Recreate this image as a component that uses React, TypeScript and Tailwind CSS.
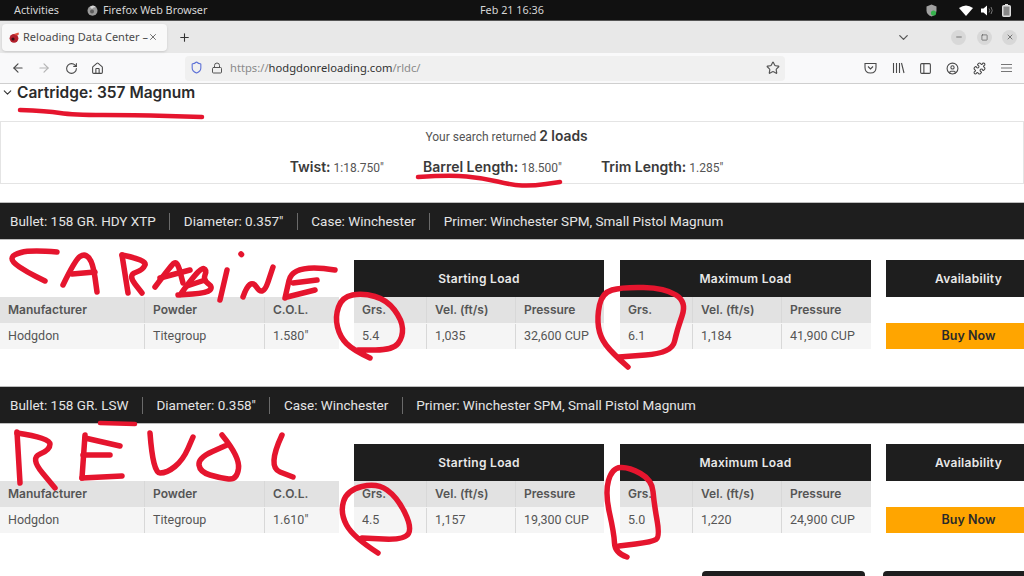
import React from 'react';
import {
  ArrowLeft,
  ArrowRight,
  ChevronDown,
  House,
  Lock,
  Minus,
  Plus,
  Puzzle,
  RotateCw,
  Shield,
  Star,
  X,
  CircleUser,
  PanelLeft,
  Square,
} from 'lucide-react';

type Point = [number, number];

const heading = { fontFamily: '"Inter", "Open Sans", sans-serif' };

// hand drawn red marks, page coordinates
const marks: Point[][] = [
  [[20, 110], [47, 111], [73, 115], [133, 115], [202, 117]],
  [[418, 177], [450, 175], [483, 178], [512, 185], [532, 186], [560, 182]],
  [[100, 423], [135, 424]],
  // CARABINE
  [[57, 252], [30, 250], [12, 255], [12, 262], [27, 272], [45, 281]],
  [[63, 285], [75, 260], [85, 253], [93, 263], [97, 292]],
  [[72, 274], [95, 272]],
  [[122, 255], [128, 293]],
  [[122, 255], [147, 260], [143, 270], [128, 275], [142, 293]],
  [[155, 287], [170, 267], [177, 260], [183, 283]],
  [[160, 278], [190, 270]],
  [[180, 295], [200, 267], [207, 270], [203, 280], [213, 287], [207, 293], [178, 295]],
  [[187, 286], [205, 280]],
  [[227, 270], [220, 300]],
  [[241, 254], [241.5, 254.5]],
  [[243, 297], [250, 277], [263, 297], [273, 267]],
  [[335, 270], [293, 263], [285, 298]],
  [[293, 283], [317, 280]],
  [[287, 297], [315, 290]],
  // circles, first table
  [[370, 358], [353, 350], [340, 337], [335, 317], [342, 297], [363, 293], [387, 300], [402, 320], [403, 337], [393, 350], [358, 350]],
  [[628, 367], [612, 353], [600, 337], [597, 317], [602, 293], [622, 287], [665, 288], [687, 302], [677, 330], [672, 353], [619, 357]],
  // REVOL
  [[17, 432], [20, 483]],
  [[17, 433], [50, 438], [50, 450], [30, 458], [55, 488]],
  [[85, 435], [82, 478]],
  [[85, 438], [120, 446]],
  [[83, 455], [110, 455]],
  [[82, 478], [122, 476]],
  [[150, 433], [153, 473], [167, 473], [183, 460], [193, 437]],
  [[222, 435], [240, 457], [237, 480], [220, 478], [200, 472], [198, 458], [227, 445]],
  [[282, 435], [267, 467], [293, 477]],
  // circles, second table
  [[378, 553], [353, 537], [340, 513], [347, 490], [377, 483], [397, 497], [412, 527], [405, 540], [362, 538]],
  [[627, 557], [615, 553], [614, 533], [605, 493], [612, 468], [629, 467], [652, 480], [654, 503], [660, 537], [652, 542], [619, 546]],
];

const smooth = (pts: Point[]) => {
  let d = `M${pts[0][0]} ${pts[0][1]}`;
  for (let i = 1; i < pts.length - 1; i++) {
    const mx = (pts[i][0] + pts[i + 1][0]) / 2;
    const my = (pts[i][1] + pts[i + 1][1]) / 2;
    d += ` Q${pts[i][0]} ${pts[i][1]} ${mx} ${my}`;
  }
  const last = pts[pts.length - 1];
  return `${d} L${last[0]} ${last[1]}`;
};

const Cell = ({ className, children }: { className: string; children: React.ReactNode }) => (
  <div className={`flex items-center pl-2 border-r border-[#d8d8d8] last:border-r-0 ${className}`}>{children}</div>
);

const Bar = ({ items }: { items: string[] }) => (
  <div className="flex h-[38px] items-center border-y border-[#bdbdbd] bg-[#1e1e1e] pl-[10px] pt-[1px] text-[13.5px] text-[#e4e4e4]">
    {items.map((item, i) => (
      <React.Fragment key={item}>
        {i > 0 && <span className="mx-[13.5px] h-[17px] w-px bg-[#6a6a6a]" />}
        <span>{item}</span>
      </React.Fragment>
    ))}
  </div>
);

const LoadHead = ({ title }: { title: string }) => (
  <div
    style={heading}
    className="flex h-[37px] items-center justify-center bg-[#1e1e1e] text-[12px] font-semibold tracking-[0.3px] text-[#e8e8e8]"
  >
    {title}
  </div>
);

const LoadColumns = ({ cols, vals }: { cols: string[]; vals: string[] }) => (
  <div>
    <div style={heading} className="flex h-[26px] bg-[#e2e2e2] text-[12px] font-semibold text-[#555555]">
      {cols.map((c, i) => (
        <Cell key={c} className={['w-[73px]', 'w-[89px]', 'flex-1'][i]}>{c}</Cell>
      ))}
    </div>
    <div className="flex h-[26px] bg-[#f5f5f5] pt-px text-[12.5px] text-[#555555]">
      {vals.map((v, i) => (
        <Cell key={v} className={['w-[73px]', 'w-[89px]', 'flex-1'][i]}>{v}</Cell>
      ))}
    </div>
  </div>
);

const LoadTable = ({ col, start, max }: { col: string; start: string[]; max: string[] }) => (
  <div className="mt-5 flex">
    <div className="w-[339px] shrink-0 pt-[37px]">
      <div style={heading} className="flex h-[26px] bg-[#e2e2e2] text-[12px] font-semibold text-[#555555]">
        <Cell className="w-[145px]">Manufacturer</Cell>
        <Cell className="w-[120px]">Powder</Cell>
        <Cell className="flex-1">C.O.L.</Cell>
      </div>
      <div className="flex h-[26px] bg-[#f5f5f5] pt-px text-[12.5px] text-[#555555]">
        <Cell className="w-[145px]">Hodgdon</Cell>
        <Cell className="w-[120px]">Titegroup</Cell>
        <Cell className="flex-1">{col}</Cell>
      </div>
    </div>
    <div className="ml-[15px] w-[250px] shrink-0">
      <LoadHead title="Starting Load" />
      <LoadColumns cols={['Grs.', 'Vel. (ft/s)', 'Pressure']} vals={start} />
    </div>
    <div className="ml-4 w-[251px] shrink-0">
      <LoadHead title="Maximum Load" />
      <LoadColumns cols={['Grs.', 'Vel. (ft/s)', 'Pressure']} vals={max} />
    </div>
    <div className="ml-[15px] w-[165px] shrink-0">
      <LoadHead title="Availability" />
      <div
        style={heading}
        className="mt-[26px] flex h-[26px] items-center justify-center bg-[#ffa500] text-[12.5px] font-semibold text-[#2a2a2a]"
      >
        Buy Now
      </div>
    </div>
  </div>
);

const Spec = ({ label, value }: { label: string; value: string }) => (
  <span className="text-[12px] text-[#555555]">
    <span style={heading} className="text-[14px] font-semibold text-[#3a3a3a]">{label}</span> {value}
  </span>
);

const WindowButton = ({ children, className }: { children: React.ReactNode; className: string }) => (
  <span className={`flex h-[15px] w-[15px] items-center justify-center rounded-full bg-[#d8d8d8] ${className}`}>{children}</span>
);

export default function App() {
  return (
    <div className="relative h-[576px] w-[1024px] overflow-hidden bg-white" style={{ fontFamily: 'Roboto, sans-serif' }}>
      {/* gnome top bar */}
      <div
        className="relative flex h-[21px] items-center justify-between border-b border-[#555555] bg-[#111111] pl-[14px] pr-[13px] text-[10.8px] text-[#d6d6d6]"
        style={{ fontFamily: '"Noto Sans", sans-serif' }}
      >
        <div className="flex items-center">
          <span>Activities</span>
          <svg className="ml-7" width="11" height="11" viewBox="0 0 11 11">
            <circle cx="5.5" cy="5.8" r="5" fill="#9a9a9a" />
            <path d="M3 2 Q6 -1 9 2 Q6 2 5 4Z" fill="#d8d8d8" />
            <circle cx="5" cy="6.5" r="2" fill="#5c5c5c" />
          </svg>
          <span className="ml-[5px]">Firefox Web Browser</span>
        </div>
        <span className="absolute left-[480px]">Feb 21  16:36</span>
        <div className="flex items-center">
          <svg width="11" height="13" viewBox="0 0 11 13">
            <path d="M5.5 0.5 L10.5 2.5 V6.5 Q10.5 10.5 5.5 12.5 Q0.5 10.5 0.5 6.5 V2.5Z" fill="#a0a0a0" />
            <circle cx="7.5" cy="9" r="2.6" fill="#37b24d" />
          </svg>
          <svg className="ml-[22px]" width="14" height="11" viewBox="0 0 14 11">
            <path d="M0 3 Q7 -2 14 3 L7 11Z" fill="#ffffff" />
          </svg>
          <svg className="ml-[8px]" width="13" height="11" viewBox="0 0 13 11">
            <path d="M0 3.5 H2.5 L6 0.5 V10.5 L2.5 7.5 H0Z" fill="#ffffff" />
            <path d="M8 3.5 Q9.5 5.5 8 7.5 M10 2 Q12.5 5.5 10 9" stroke="#777777" fill="none" />
          </svg>
          <svg className="ml-[8px]" width="9" height="13" viewBox="0 0 9 13">
            <rect x="3" y="0" width="3" height="1.5" fill="#dddddd" />
            <rect x="0.75" y="1.75" width="7.5" height="10.5" rx="1" fill="#888888" stroke="#dddddd" strokeWidth="1.5" />
          </svg>
        </div>
      </div>

      {/* tab strip */}
      <div className="flex h-[32px] items-center justify-between bg-[#e8e8e8] pl-[2px] pr-[7px]">
        <div className="flex items-center">
          <div className="flex h-[27px] w-[165px] items-center rounded bg-[#f9f9f9] pl-[7px] shadow-sm" style={{ fontFamily: '"Noto Sans", sans-serif' }}>
            <svg width="11" height="11" viewBox="0 0 11 11">
              <circle cx="5" cy="6.3" r="4.4" fill="#b3202c" />
              <circle cx="4" cy="7" r="1.6" fill="#3a1015" />
              <path d="M5 2 L9.5 0.5 L10 2.5 L7 3.5Z" fill="#e0503c" />
            </svg>
            <span className="ml-[3px] w-[125px] whitespace-nowrap text-[11px] text-[#4a4a4a]">Reloading Data Center –</span>
            <X size={10} className="text-[#555555]" />
          </div>
          <Plus size={13} className="ml-[11px] text-[#333333]" />
        </div>
        <div className="flex items-center">
          <ChevronDown size={15} className="text-[#555555]" />
          <WindowButton className="ml-[40px]"><Minus size={8} className="text-[#444444]" /></WindowButton>
          <WindowButton className="ml-[11px]"><Square size={7} className="text-[#444444]" /></WindowButton>
          <WindowButton className="ml-[10px]"><X size={8} className="text-[#444444]" /></WindowButton>
        </div>
      </div>

      {/* nav toolbar */}
      <div className="flex h-[31px] items-center border-b border-[#cfcfcf] bg-[#f9f9fa] pl-[11px] text-[#4a4a4a]">
        <ArrowLeft size={14} />
        <ArrowRight size={14} className="ml-[12px] text-[#b5b5b5]" />
        <RotateCw size={13} className="ml-[14px]" />
        <House size={13} className="ml-[13px]" />
        <div className="ml-[81px] flex h-[25px] w-[600px] items-center justify-between rounded bg-[#f0f0f0] pl-[5px] pr-[5px]" style={{ fontFamily: '"Noto Sans", sans-serif' }}>
          <div className="flex items-center text-[11.2px] text-[#8a8a8a]">
            <Shield size={13} className="text-[#5b6fd6]" />
            <Lock size={12} className="ml-[8px] text-[#555555]" />
            <span className="ml-[7px]">https://<span className="text-[#333333]">hodgdonreloading.com</span>/rldc/</span>
          </div>
          <Star size={14} className="text-[#555555]" />
        </div>
        <div className="ml-[79px] flex items-center">
          <svg width="13" height="12" viewBox="0 0 13 12" fill="none" stroke="currentColor" strokeWidth="1.1">
            <path d="M1 1.5 H12 V5.5 Q12 11 6.5 11 Q1 11 1 5.5Z" />
            <path d="M4 4.5 L6.5 7 L9 4.5" />
          </svg>
          <svg className="ml-[15px]" width="13" height="12" viewBox="0 0 13 12" fill="none" stroke="currentColor" strokeWidth="1.1">
            <path d="M1.5 1 V11 M4.5 1 V11 M7.5 1 V11 M9.5 1 L12 11" />
          </svg>
          <PanelLeft size={13} className="ml-[14px]" />
          <CircleUser size={13} className="ml-[14px]" />
          <Puzzle size={13} className="ml-[14px]" />
          <svg className="ml-[14px]" width="13" height="12" viewBox="0 0 13 12" stroke="#777777" strokeWidth="1.2">
            <path d="M1 2.5 H12 M1 6 H12 M1 9.5 H12" />
          </svg>
        </div>
      </div>

      {/* page */}
      <div className="flex h-[37px] items-start pl-[1px]">
        <ChevronDown size={13} className="mt-[2px] text-[#333333]" />
        <h2 style={heading} className="ml-[3px] text-[15.5px] font-semibold leading-[17px] text-[#2b2b2b]">Cartridge: 357 Magnum</h2>
      </div>
      <div className="flex h-[63px] flex-col items-center border border-[#e4e4e4] pr-[11px] pt-[6px]">
        <div className="text-[12px] text-[#555555] leading-[16px]">
          Your search returned <span style={heading} className="text-[13.8px] font-semibold text-[#3a3a3a]">2 loads</span>
        </div>
        <div className="mt-[14px] flex gap-[39px] leading-[16px]">
          <Spec label="Twist:" value={'1:18.750"'} />
          <Spec label="Barrel Length:" value={'18.500"'} />
          <Spec label="Trim Length:" value={'1.285"'} />
        </div>
      </div>

      <div className="mt-[18px]">
        <Bar items={['Bullet: 158 GR. HDY XTP', 'Diameter: 0.357"', 'Case: Winchester', 'Primer: Winchester SPM, Small Pistol Magnum']} />
        <LoadTable col={'1.580"'} start={['5.4', '1,035', '32,600 CUP']} max={['6.1', '1,184', '41,900 CUP']} />
      </div>
      <div className="mt-[37px]">
        <Bar items={['Bullet: 158 GR. LSW', 'Diameter: 0.358"', 'Case: Winchester', 'Primer: Winchester SPM, Small Pistol Magnum']} />
        <LoadTable col={'1.610"'} start={['4.5', '1,157', '19,300 CUP']} max={['5.0', '1,220', '24,900 CUP']} />
      </div>
      <div className="mt-[38px] flex justify-end">
        <div className="h-2 w-[163px] rounded-t bg-[#1e1e1e]" />
        <div className="ml-[18px] h-2 w-[141px] rounded-tl bg-[#1e1e1e]" />
      </div>

      {/* red pen marks drawn over the screenshot */}
      <svg className="pointer-events-none absolute left-0 top-0" width="1024" height="576" fill="none">
        {marks.map((m, i) => (
          <path key={i} d={smooth(m)} stroke="#e5152e" strokeWidth={i < 3 ? 4.5 : 5.5} strokeLinecap="round" strokeLinejoin="round" />
        ))}
      </svg>
    </div>
  );
}
